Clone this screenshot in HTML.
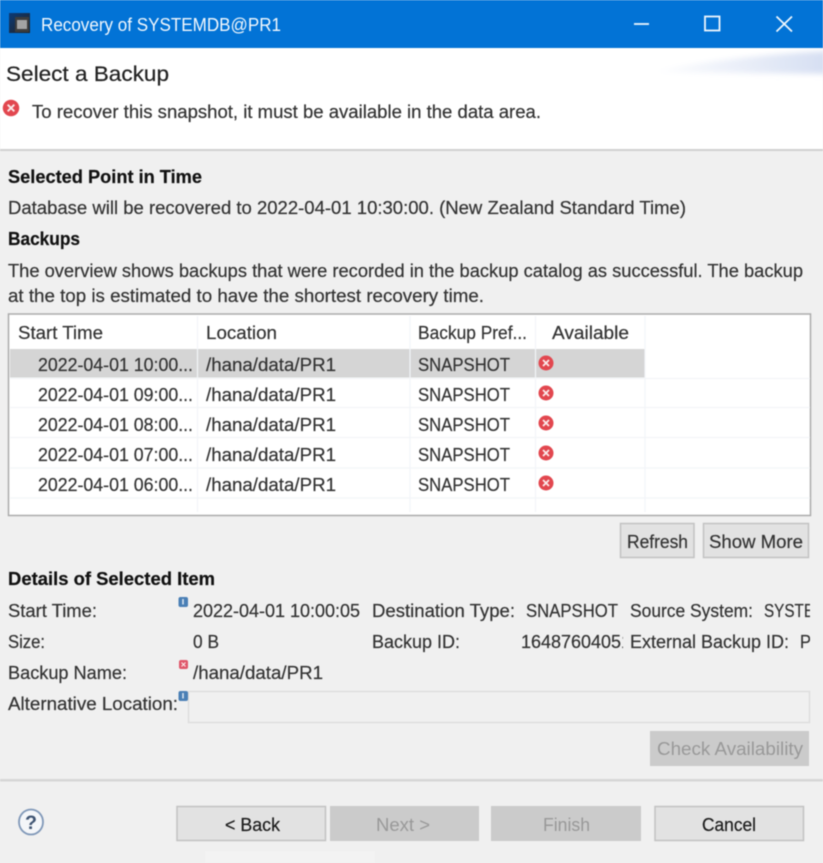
<!DOCTYPE html>
<html lang="en">
<head>
<meta charset="utf-8">
<title>Recovery of SYSTEMDB@PR1</title>
<style>
html,body{margin:0;padding:0;width:823px;height:863px;overflow:hidden;background:#f0f0f0}
svg{display:block;filter:blur(.45px)}
text{font-family:"Liberation Sans",sans-serif;font-size:18.5px;fill:#333;stroke:#333;stroke-width:.2px}
.b{font-weight:bold;fill:#111;stroke:#111}
.d{fill:#999;stroke:none}
.k{fill:#1c1c1c;stroke:#1c1c1c}
</style>
</head>
<body>
<svg xmlns="http://www.w3.org/2000/svg" width="823" height="863" viewBox="0 0 823 863">
<defs>
<linearGradient id="g" x1="0" x2="1" y1="0" y2="0"><stop offset="0" stop-color="#fff"/><stop offset="1" stop-color="#d5def2"/></linearGradient>
<linearGradient id="t" x1="0" x2="1" y1="0" y2="1"><stop offset="0" stop-color="#0b3a78"/><stop offset="1" stop-color="#232323"/></linearGradient>
<filter id="f" x="-10%" y="-50%" width="120%" height="200%"><feGaussianBlur stdDeviation="3"/></filter>
<clipPath id="c1"><rect x="0" y="590" width="810" height="70"/></clipPath>
<clipPath id="c2"><rect x="0" y="630" width="623" height="30"/></clipPath>
<g id="err"><circle r="7.500" fill="#e2474f"/><path d="M-3-3L3 3M3-3L-3 3" stroke="#fbe8e8" stroke-width="1.800"/></g>
<g id="inf"><rect x="-4.500" y="-5" width="9.500" height="10" rx="2" fill="#4a7fb5"/><path d="M0-3V2.500" stroke="#dfe9f3" stroke-width="1.500"/></g>
</defs>
<rect width="823" height="863" fill="#f0f0f0"/>
<rect width="823" height="48" fill="#0273d6"/>
<rect y="48" width="823" height="101" fill="#fff"/>
<path d="M650 72C700 62 760 54 830 51V74C760 73 700 73 650 72Z" fill="url(#g)" filter="url(#f)"/>
<rect y="0" width="823" height="48" fill="#0273d6"/>

<rect x="9" y="13" width="21" height="20" fill="url(#t)"/>
<rect x="15" y="17" width="14" height="15" fill="#3d3d3d"/>
<rect x="17" y="20" width="10" height="9" fill="#a3a3a3"/>
<text x="41" y="31" style="fill:#f2f8fd;stroke:none" textLength="240" lengthAdjust="spacingAndGlyphs">Recovery of SYSTEMDB@PR1</text>
<path d="M634 24H649" stroke="#eef6fd" stroke-width="1.800"/>
<rect x="705" y="16.500" width="14.500" height="14" fill="none" stroke="#eef6fd" stroke-width="1.800"/>
<path d="M776.500 16.500L792 31.500M792 16.500L776.500 31.500" stroke="#eef6fd" stroke-width="1.800"/>

<text x="6" y="81" style="font-size:21px;fill:#222;stroke:#222" textLength="163" lengthAdjust="spacingAndGlyphs">Select a Backup</text>
<use href="#err" transform="translate(11 108) scale(1.100)"/>
<text x="32" y="118" textLength="509" lengthAdjust="spacingAndGlyphs">To recover this snapshot, it must be available in the data area.</text>
<rect y="149" width="823" height="2" fill="#d0d0d0"/>

<text x="8" y="183" class="b" textLength="194" lengthAdjust="spacingAndGlyphs">Selected Point in Time</text>
<text x="8" y="214" textLength="678" lengthAdjust="spacingAndGlyphs">Database will be recovered to 2022-04-01 10:30:00. (New Zealand Standard Time)</text>
<text x="8" y="245" class="b" textLength="72" lengthAdjust="spacingAndGlyphs">Backups</text>
<text x="8" y="277" textLength="795" lengthAdjust="spacingAndGlyphs">The overview shows backups that were recorded in the backup catalog as successful. The backup</text>
<text x="8" y="302" textLength="476" lengthAdjust="spacingAndGlyphs">at the top is estimated to have the shortest recovery time.</text>

<rect x="8.500" y="314" width="802" height="201.500" fill="#fff" stroke="#ababab" stroke-width="1.500"/>
<rect x="10" y="349" width="635" height="28.500" fill="#d5d5d5"/>
<g stroke="#f3f5f8" stroke-width="1.200">
<path d="M10 378.500H810M10 407.500H810M10 437.500H810M10 468H810M10 498H810"/>
<path d="M197.500 316V512M410 316V512M535.500 316V512M645 316V512"/>
</g>
<text x="18" y="339" textLength="85" lengthAdjust="spacingAndGlyphs">Start Time</text>
<text x="206" y="339" textLength="71" lengthAdjust="spacingAndGlyphs">Location</text>
<text x="418" y="339" textLength="109" lengthAdjust="spacingAndGlyphs">Backup Pref...</text>
<text x="552" y="339" textLength="77" lengthAdjust="spacingAndGlyphs">Available</text>

<text x="38" y="371" textLength="155" lengthAdjust="spacingAndGlyphs">2022-04-01 10:00...</text>
<text x="206" y="371" textLength="130" lengthAdjust="spacingAndGlyphs">/hana/data/PR1</text>
<text x="418" y="371" textLength="92" lengthAdjust="spacingAndGlyphs">SNAPSHOT</text>
<use href="#err" transform="translate(546 363)"/>
<text x="38" y="401" textLength="155" lengthAdjust="spacingAndGlyphs">2022-04-01 09:00...</text>
<text x="206" y="401" textLength="130" lengthAdjust="spacingAndGlyphs">/hana/data/PR1</text>
<text x="418" y="401" textLength="92" lengthAdjust="spacingAndGlyphs">SNAPSHOT</text>
<use href="#err" transform="translate(546 393)"/>
<text x="38" y="431" textLength="155" lengthAdjust="spacingAndGlyphs">2022-04-01 08:00...</text>
<text x="206" y="431" textLength="130" lengthAdjust="spacingAndGlyphs">/hana/data/PR1</text>
<text x="418" y="431" textLength="92" lengthAdjust="spacingAndGlyphs">SNAPSHOT</text>
<use href="#err" transform="translate(546 423)"/>
<text x="38" y="461" textLength="155" lengthAdjust="spacingAndGlyphs">2022-04-01 07:00...</text>
<text x="206" y="461" textLength="130" lengthAdjust="spacingAndGlyphs">/hana/data/PR1</text>
<text x="418" y="461" textLength="92" lengthAdjust="spacingAndGlyphs">SNAPSHOT</text>
<use href="#err" transform="translate(546 453)"/>
<text x="38" y="491" textLength="155" lengthAdjust="spacingAndGlyphs">2022-04-01 06:00...</text>
<text x="206" y="491" textLength="130" lengthAdjust="spacingAndGlyphs">/hana/data/PR1</text>
<text x="418" y="491" textLength="92" lengthAdjust="spacingAndGlyphs">SNAPSHOT</text>
<use href="#err" transform="translate(546 483)"/>

<rect x="620.500" y="523.500" width="73.500" height="34" fill="#e2e2e2" stroke="#c2c2c2" stroke-width="1.500"/>
<text x="627" y="548" textLength="61" lengthAdjust="spacingAndGlyphs">Refresh</text>
<rect x="703.500" y="523.500" width="105" height="34" fill="#e2e2e2" stroke="#c2c2c2" stroke-width="1.500"/>
<text x="709" y="548" textLength="94" lengthAdjust="spacingAndGlyphs">Show More</text>

<text x="8" y="585" class="b" textLength="207" lengthAdjust="spacingAndGlyphs">Details of Selected Item</text>
<text x="8" y="617" textLength="89" lengthAdjust="spacingAndGlyphs">Start Time:</text>
<use href="#inf" transform="translate(183 602)"/>
<text x="193" y="617" textLength="167" lengthAdjust="spacingAndGlyphs">2022-04-01 10:00:05</text>
<text x="372" y="617" textLength="143" lengthAdjust="spacingAndGlyphs">Destination Type:</text>
<text x="526" y="617" textLength="92" lengthAdjust="spacingAndGlyphs">SNAPSHOT</text>
<text x="630" y="617" textLength="123" lengthAdjust="spacingAndGlyphs">Source System:</text>
<g clip-path="url(#c1)"><text x="764" y="617" textLength="84" lengthAdjust="spacingAndGlyphs">SYSTEMDB</text></g>

<text x="8" y="648" textLength="37" lengthAdjust="spacingAndGlyphs">Size:</text>
<text x="193" y="648" textLength="26" lengthAdjust="spacingAndGlyphs">0 B</text>
<text x="372" y="648" textLength="88" lengthAdjust="spacingAndGlyphs">Backup ID:</text>
<g clip-path="url(#c2)"><text x="521" y="648" textLength="110" lengthAdjust="spacingAndGlyphs">16487604051</text></g>
<text x="630" y="648" textLength="159" lengthAdjust="spacingAndGlyphs">External Backup ID:</text>
<g clip-path="url(#c1)"><text x="800" y="648" textLength="11" lengthAdjust="spacingAndGlyphs">P</text></g>

<text x="8" y="679" textLength="119" lengthAdjust="spacingAndGlyphs">Backup Name:</text>
<rect x="179" y="660" width="9" height="9" rx="2" fill="#e0566a"/>
<path d="M181.500 662.500L185.500 666.500M185.500 662.500L181.500 666.500" stroke="#fbe8e8" stroke-width="1.200"/>
<text x="193" y="679" textLength="130" lengthAdjust="spacingAndGlyphs">/hana/data/PR1</text>

<text x="8" y="710" textLength="170" lengthAdjust="spacingAndGlyphs">Alternative Location:</text>
<rect x="188.500" y="691.500" width="621" height="31" fill="#f0f0f0" stroke="#dedede" stroke-width="1.500"/>
<use href="#inf" transform="translate(183 696)"/>

<rect x="650" y="731" width="159" height="35" fill="#cbcbcb"/>
<text x="657" y="755" class="d" textLength="146" lengthAdjust="spacingAndGlyphs">Check Availability</text>

<rect y="779" width="823" height="2.500" fill="#d6d6d6"/>

<ellipse cx="31" cy="822" rx="12" ry="12.500" fill="#f4f6f9" stroke="#8098b8" stroke-width="1.800"/>
<text x="25" y="829" class="b" style="font-size:19px;fill:#3f5472;stroke:none" textLength="12" lengthAdjust="spacingAndGlyphs">?</text>

<rect x="177" y="806.500" width="148.500" height="34" fill="#e2e2e2" stroke="#c2c2c2" stroke-width="1.500"/>
<text x="225" y="831" class="k" textLength="55" lengthAdjust="spacingAndGlyphs">&lt; Back</text>
<rect x="330" y="806" width="149" height="35" fill="#cbcbcb"/>
<text x="376" y="831" class="d" textLength="54" lengthAdjust="spacingAndGlyphs">Next &gt;</text>
<rect x="491" y="806" width="150" height="35" fill="#cbcbcb"/>
<text x="543" y="831" class="d" textLength="47" lengthAdjust="spacingAndGlyphs">Finish</text>
<rect x="655" y="806.500" width="148.500" height="34" fill="#e2e2e2" stroke="#c2c2c2" stroke-width="1.500"/>
<text x="702" y="831" class="k" textLength="54" lengthAdjust="spacingAndGlyphs">Cancel</text>
<rect x="205" y="851" width="170" height="12" fill="#f3f3f3"/>
</svg>
</body>
</html>
